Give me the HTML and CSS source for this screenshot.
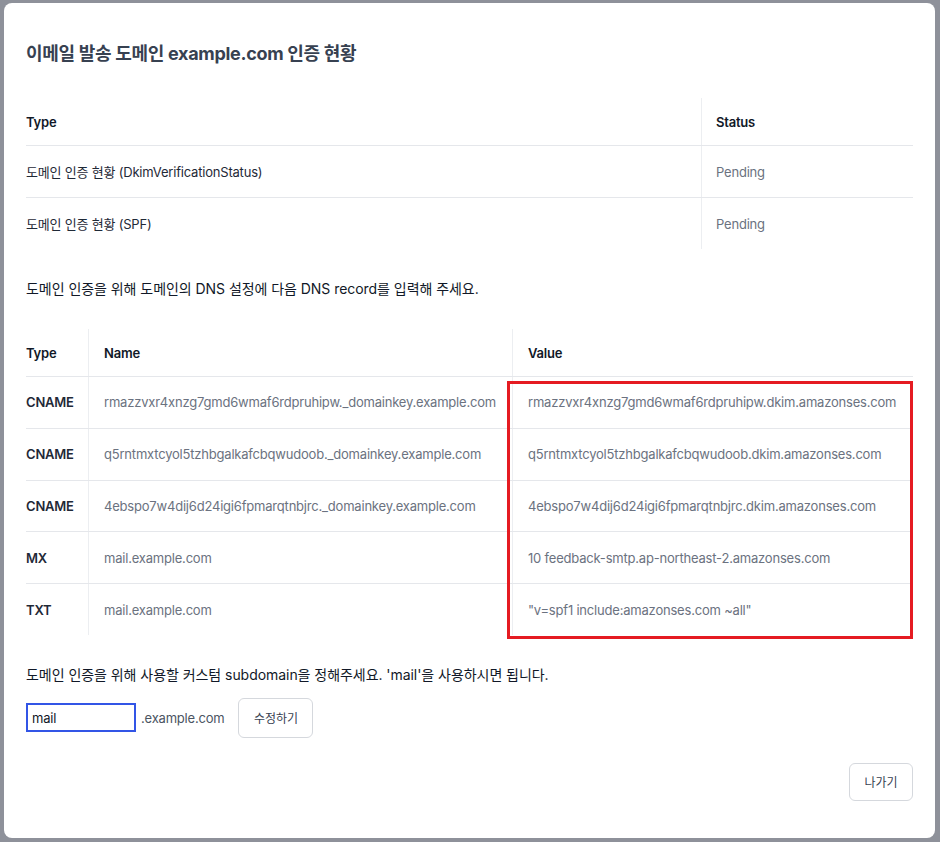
FILE: index.html
```html
<!DOCTYPE html>
<html lang="ko">
<head>
    <meta charset="UTF-8">
    <meta name="viewport" content="width=device-width, initial-scale=1.0">
    <title>도메인 인증 현황</title>
    <link rel="stylesheet" href="styles.css">
</head>
<body>
    <div class="modal">
        <h2 class="modal-title">이메일 발송 도메인 example.com 인증 현황</h2>

        <table class="grid status-table">
            <thead>
                <tr>
                    <th>Type</th>
                    <th class="col-status">Status</th>
                </tr>
            </thead>
            <tbody>
                <tr>
                    <td class="label">도메인 인증 현황 (DkimVerificationStatus)</td>
                    <td class="muted">Pending</td>
                </tr>
                <tr>
                    <td class="label">도메인 인증 현황 (SPF)</td>
                    <td class="muted">Pending</td>
                </tr>
            </tbody>
        </table>

        <p class="note">도메인 인증을 위해 도메인의 DNS 설정에 다음 DNS record를 입력해 주세요.</p>

        <div class="records">
            <table class="grid record-table">
                <thead>
                    <tr>
                        <th class="col-type">Type</th>
                        <th class="col-name">Name</th>
                        <th>Value</th>
                    </tr>
                </thead>
                <tbody>
                    <tr>
                        <td class="type">CNAME</td>
                        <td class="muted">rmazzvxr4xnzg7gmd6wmaf6rdpruhipw._domainkey.example.com</td>
                        <td class="muted">rmazzvxr4xnzg7gmd6wmaf6rdpruhipw.dkim.amazonses.com</td>
                    </tr>
                    <tr>
                        <td class="type">CNAME</td>
                        <td class="muted">q5rntmxtcyol5tzhbgalkafcbqwudoob._domainkey.example.com</td>
                        <td class="muted">q5rntmxtcyol5tzhbgalkafcbqwudoob.dkim.amazonses.com</td>
                    </tr>
                    <tr>
                        <td class="type">CNAME</td>
                        <td class="muted">4ebspo7w4dij6d24igi6fpmarqtnbjrc._domainkey.example.com</td>
                        <td class="muted">4ebspo7w4dij6d24igi6fpmarqtnbjrc.dkim.amazonses.com</td>
                    </tr>
                    <tr>
                        <td class="type">MX</td>
                        <td class="muted">mail.example.com</td>
                        <td class="muted">10 feedback-smtp.ap-northeast-2.amazonses.com</td>
                    </tr>
                    <tr>
                        <td class="type">TXT</td>
                        <td class="muted">mail.example.com</td>
                        <td class="muted">"v=spf1 include:amazonses.com ~all"</td>
                    </tr>
                </tbody>
            </table>
            <div class="highlight"></div>
        </div>

        <p class="note">도메인 인증을 위해 사용할 커스텀 subdomain을 정해주세요. 'mail'을 사용하시면 됩니다.</p>

        <div class="subdomain-row">
            <input class="subdomain-input" type="text" value="mail">
            <span class="suffix">.example.com</span>
            <button class="btn btn-edit">수정하기</button>
        </div>

        <div class="footer">
            <button class="btn btn-exit">나가기</button>
        </div>
    </div>
</body>
</html>
```

FILE: styles.css
```css
body, html {
    margin: 0;
    padding: 0;
    width: 100%;
    height: 100%;
    overflow: hidden;
    background: #8e919a;
    font-family: Inter, "Noto Sans CJK KR", sans-serif;
}
.modal {
    box-sizing: border-box;
    width: 931px;
    height: 835px;
    margin: 3px 0 0 4px;
    padding: 37px 22px 0 22px;
    background: #fff;
    border-radius: 8px;
    letter-spacing: -0.2px;
}
.modal-title {
    margin: 0 0 30px 0;
    font-size: 18px;
    line-height: 28px;
    font-weight: 700;
    color: #374151;
    letter-spacing: -0.3px;
}
.grid {
    width: 100%;
    table-layout: fixed;
    border-collapse: collapse;
    font-size: 13px;
}
.grid th {
    height: 47px;
    padding: 0 14px;
    text-align: left;
    font-weight: 600;
    color: #111827;
    border-bottom: 1px solid #e5e7eb;
    border-left: 1px solid #eceef1;
}
.grid td {
    height: 51px;
    padding: 0 14px;
    white-space: nowrap;
    border-bottom: 1px solid #e5e7eb;
    border-left: 1px solid #eceef1;
}
.grid th:first-child,
.grid td:first-child {
    padding-left: 0;
    border-left: none;
}
.grid tbody tr:last-child td {
    border-bottom: none;
}
.col-status {
    width: 183px;
}
.label {
    color: #1f2937;
}
.muted {
    color: #6b7280;
}
.col-type {
    width: 48px;
}
.col-name {
    width: 394px;
}
.record-table td {
    height: 50.8px;
}
.grid td.type {
    font-weight: 600;
    color: #1f2937;
}
.record-table th:nth-child(n+2),
.record-table td:nth-child(n+2) {
    padding-left: 15px;
}
.note {
    margin: 30px 0 30px 0;
    font-size: 14px;
    line-height: 20px;
    color: #111827;
    letter-spacing: -0.05px;
}
.records {
    position: relative;
}
.highlight {
    position: absolute;
    top: 52px;
    left: 481px;
    width: 406px;
    height: 258px;
    box-sizing: border-box;
    border: 3px solid #e51b22;
}
.subdomain-row {
    display: flex;
    align-items: center;
    margin-top: -17px;
}
.subdomain-input {
    box-sizing: border-box;
    width: 110px;
    height: 29px;
    padding: 0 4px;
    border: 2px solid #3255e6;
    outline: none;
    font-family: inherit;
    font-size: 13px;
    letter-spacing: -0.2px;
    color: #111827;
}
.suffix {
    margin-left: 5px;
    font-size: 13px;
    color: #4b5563;
}
.btn {
    box-sizing: border-box;
    background: #fff;
    border: 1px solid #d5d8dd;
    border-radius: 6px;
    font-family: inherit;
    font-size: 12px;
    color: #374151;
    cursor: pointer;
}
.btn-edit {
    width: 75px;
    height: 40px;
    margin-left: 14px;
}
.footer {
    display: flex;
    justify-content: flex-end;
    margin-top: 25px;
}
.btn-exit {
    width: 64px;
    height: 38px;
}
```
